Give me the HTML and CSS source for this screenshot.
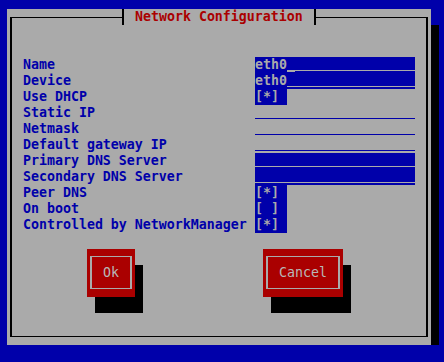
FILE: index.html
```html
<!DOCTYPE html>
<html lang="en">
<head>
    <meta charset="UTF-8">
    <title>Network Configuration</title>
    <link rel="stylesheet" href="styles.css">
</head>
<body>
    <div class="screen">
        <div class="dialog">
            <fieldset class="frame">
                <legend class="title">Network Configuration</legend>
                <div class="form">
                    <span class="label">Name</span>
                    <span class="entry filled"><span class="value">eth0</span><span class="cursor"></span><span class="fill"></span></span>

                    <span class="label">Device</span>
                    <span class="entry filled"><span class="value">eth0</span><span class="fill"></span></span>

                    <span class="label">Use DHCP</span>
                    <span class="check">[*] </span>

                    <span class="label">Static IP</span>
                    <span class="entry empty"><span class="fill"></span></span>

                    <span class="label">Netmask</span>
                    <span class="entry empty"><span class="fill"></span></span>

                    <span class="label">Default gateway IP</span>
                    <span class="entry empty"><span class="fill"></span></span>

                    <span class="label">Primary DNS Server</span>
                    <span class="entry filled"><span class="fill"></span></span>

                    <span class="label">Secondary DNS Server</span>
                    <span class="entry filled"><span class="fill"></span></span>

                    <span class="label">Peer DNS</span>
                    <span class="check">[*] </span>

                    <span class="label">On boot</span>
                    <span class="check">[ ] </span>

                    <span class="label">Controlled by NetworkManager</span>
                    <span class="check">[*] </span>
                </div>
                <div class="buttons">
                    <button class="btn"><span class="btn-face">Ok</span></button>
                    <button class="btn"><span class="btn-face">Cancel</span></button>
                </div>
            </fieldset>
        </div>
    </div>
</body>
</html>
```

FILE: styles.css
```css
* {
  margin: 0;
  padding: 0;
  box-sizing: border-box;
}

body {
  background-color: #0000aa;
  font-family: 'DejaVu Sans Mono', 'Liberation Mono', monospace;
  font-size: 13.28px;
  font-weight: bold;
  line-height: 16px;
}

.screen {
  padding: 9px 0 0 7px;
}

.dialog {
  width: 424px;
  background-color: #aaaaaa;
  padding-bottom: 8px;
  box-shadow: 8px 16px 0 #000;
}

.frame {
  margin: 0 3px;
  padding: 0 0 39px 0;
  border: solid #000;
  border-width: 1px 2px;
}

.title {
  margin-left: 110px;
  padding: 0 11px;
  border-left: 2px solid #000;
  border-right: 2px solid #000;
  color: #aa0000;
  line-height: 16px;
}

.form {
  display: grid;
  grid-template-columns: 232px 160px;
  grid-auto-rows: 16px;
  padding: 32px 0 0 11px;
}

.label {
  color: #0000aa;
  white-space: pre;
}

.entry {
  display: flex;
  height: 16px;
}

.entry.filled {
  background-color: #0000aa;
  color: #aaaaaa;
}

.value {
  white-space: pre;
}

.fill {
  flex: 1;
  height: 14px;
  border-bottom: 1px solid #aaaaaa;
}

.entry.empty .fill {
  border-bottom-color: #0000aa;
}

.cursor {
  width: 8px;
  height: 15px;
  border-bottom: 2px solid #aaaaaa;
}

.check {
  justify-self: start;
  width: 32px;
  background-color: #0000aa;
  color: #aaaaaa;
  white-space: pre;
}

.buttons {
  display: flex;
  gap: 128px;
  margin-top: 16px;
  padding-left: 75px;
}

.btn {
  display: flex;
  padding: 7px 3px 8px 3px;
  height: 48px;
  border: none;
  background-color: #aa0000;
  box-shadow: 8px 16px 0 #000;
  font: inherit;
  font-weight: normal;
  color: #b8b8b8;
}

.btn-face {
  display: flex;
  align-items: center;
  padding: 0 11px;
  border: solid #aaaaaa;
  border-width: 1px 2px;
  white-space: pre;
}
```
